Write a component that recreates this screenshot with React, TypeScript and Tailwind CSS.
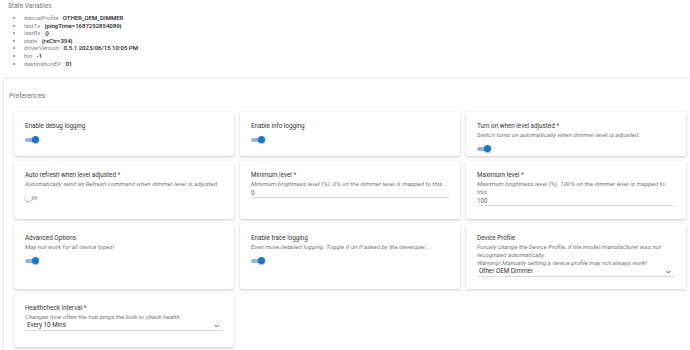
import { ReactNode } from "react";

const stateVars: [string, string][] = [
  ["deviceProfile", "OTHER_OEM_DIMMER"],
  ["lastTx", "{pingTime=1687252854089}"],
  ["lastRx", "{}"],
  ["stats", "{rxCtr=354}"],
  ["driverVersion", "0.5.1 2023/06/15 10:05 PM"],
  ["bin", "-1"],
  ["destinationEP", "01"],
];

function Toggle({ on }: { on: boolean }) {
  if (on) {
    return (
      <div className="relative mt-[6px] h-[7px] w-[14px]">
        <div className="absolute left-0 top-[1.5px] h-[4px] w-[12px] rounded-full bg-[#8fb6dd]" />
        <div className="absolute right-0 top-0 h-[7px] w-[7px] rounded-full bg-[#1976d2] shadow-[0_1px_1px_rgba(0,0,0,0.3)]" />
      </div>
    );
  }
  return (
    <div className="relative mt-[6px] h-[7px] w-[14px]">
      <div className="absolute left-[1px] top-[1.5px] h-[4px] w-[12px] rounded-full bg-[#cfcfcf]" />
      <div className="absolute left-0 top-0 h-[7px] w-[7px] rounded-full bg-white shadow-[0_1px_2px_rgba(0,0,0,0.35)]" />
    </div>
  );
}

function Card({ title, star, desc, children }: { title: string; star?: boolean; desc?: ReactNode; children?: ReactNode }) {
  return (
    <div className="bg-white rounded-[2px] shadow-[0_1px_3px_rgba(0,0,0,0.22)] px-[11px] pt-[10px]">
      <div className="text-[6.3px] leading-[8px] text-[#333]">
        {title}
        {star && <span className="text-[#555]"> *</span>}
      </div>
      {desc && <div className="mt-[1px] text-[6.2px] leading-[8px] italic text-[#777]">{desc}</div>}
      {children}
    </div>
  );
}

function Input({ value }: { value: string }) {
  return (
    <div className="h-[10px] border-b border-[#dcdcdc] text-[6.3px] leading-[10px] text-[#666]">{value}</div>
  );
}

function Select({ value }: { value: string }) {
  return (
    <div className="flex h-[10px] items-center justify-between border-b border-[#dcdcdc] pl-[2px] pr-[4px] text-[6.3px] text-[#333]">
      <span>{value}</span>
      <svg width="5" height="4" viewBox="0 0 10 6">
        <path d="M1 1l4 4 4-4" fill="none" stroke="#444" strokeWidth="1.8" />
      </svg>
    </div>
  );
}

export default function App() {
  return (
    <div className="h-[350px] w-[690px] overflow-hidden bg-white font-['Roboto',sans-serif]">
      <div className="pl-[8px] pt-[2px] text-[6.5px] leading-[9px] text-[#777]">State Variables</div>
      <ul className="mt-[3px] list-disc pl-[24px] text-[6px] leading-[7.6px] marker:text-[#888]">
        {stateVars.map(([k, v]) => (
          <li key={k}>
            <span className="text-[#888]">{k} : </span>
            <span className="font-medium text-[#222]">{v}</span>
          </li>
        ))}
      </ul>

      <div className="ml-[3px] mt-[11px] h-[300px] border-l border-t border-[#ececec] shadow-[0_0_3px_rgba(0,0,0,0.08)]">
        <div className="pl-[5px] pt-[13px] text-[6.8px] leading-[9px] text-[#777]">Preferences</div>
        <div className="mt-[11px] grid grid-cols-[220px_220px_220px] grid-rows-[44px_58px_65px_53px] gap-x-[6px] gap-y-[5px] pl-[10px]">
          <Card title="Enable debug logging">
            <Toggle on />
          </Card>
          <Card title="Enable info logging">
            <Toggle on />
          </Card>
          <Card title="Turn on when level adjusted" star desc="Switch turns on automatically when dimmer level is adjusted.">
            <Toggle on />
          </Card>

          <Card title="Auto refresh when level adjusted" star desc="Automatically send an Refresh command when dimmer level is adjusted.">
            <Toggle on={false} />
          </Card>
          <Card title="Minimum level" star desc="Minimum brightness level (%). 0% on the dimmer level is mapped to this.">
            <Input value="0" />
          </Card>
          <Card title="Maximum level" star desc="Maximum brightness level (%). 100% on the dimmer level is mapped to this.">
            <Input value="100" />
          </Card>

          <Card title="Advanced Options" desc="May not work for all device types!">
            <Toggle on />
          </Card>
          <Card title="Enable trace logging" desc="Even more detailed logging. Toggle it on if asked by the developer...">
            <Toggle on />
          </Card>
          <Card
            title="Device Profile"
            desc={
              <>
                Forcely change the Device Profile, if the model/manufacturer was not recognized automatically.
                <br />
                Warning! Manually setting a device profile may not always work!
              </>
            }
          >
            <Select value="Other OEM Dimmer" />
          </Card>

          <Card title="Healthcheck Interval" star desc="Changes how often the hub pings the bulb to check health.">
            <Select value="Every 10 Mins" />
          </Card>
        </div>
      </div>
    </div>
  );
}
